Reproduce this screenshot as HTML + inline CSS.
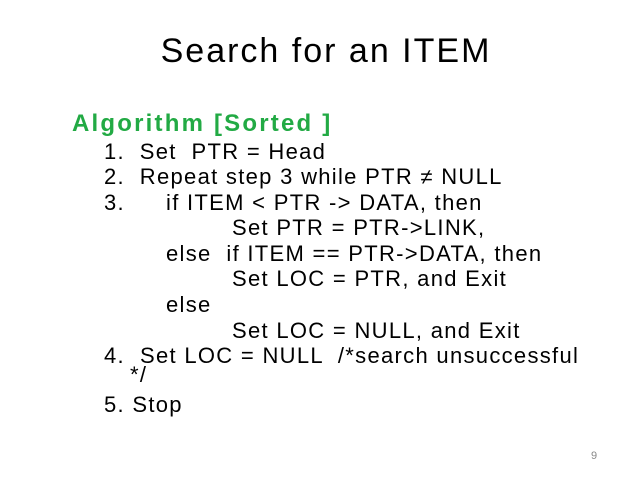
<!DOCTYPE html>
<html><head><meta charset="utf-8"><style>
body{margin:0;width:638px;height:479px;background:#fff;position:relative;overflow:hidden;font-family:"Liberation Sans",sans-serif;color:#000}
.t{position:absolute;white-space:pre;font-size:22px;line-height:24px;letter-spacing:1.3px}
</style></head><body>
<div class="t" style="left:0;width:652px;text-align:center;top:32px;font-size:34px;line-height:38px;letter-spacing:2px">Search for an ITEM</div>
<div class="t" style="left:72px;top:112px;font-size:24px;font-weight:bold;color:#22aa44;letter-spacing:2.2px">Algorithm [Sorted ]</div>
<div class="t" style="left:104px;top:140px">1.  Set  PTR = Head</div>
<div class="t" style="left:104px;top:165px">2.  Repeat step 3 while PTR &#8800; NULL</div>
<div class="t" style="left:104px;top:191px">3.</div>
<div class="t" style="left:166px;top:191px">if ITEM &lt; PTR -&gt; DATA, then</div>
<div class="t" style="left:232px;top:216px">Set PTR = PTR-&gt;LINK,</div>
<div class="t" style="left:166px;top:242px">else  if ITEM == PTR-&gt;DATA, then</div>
<div class="t" style="left:232px;top:267px">Set LOC = PTR, and Exit</div>
<div class="t" style="left:166px;top:293px">else</div>
<div class="t" style="left:232px;top:319px">Set LOC = NULL, and Exit</div>
<div class="t" style="left:104px;top:344px">4.</div>
<div class="t" style="left:140px;top:344px">Set LOC = NULL  /*search unsuccessful</div>
<div class="t" style="left:130px;top:363px">*/</div>
<div class="t" style="left:104px;top:393px">5. Stop</div>
<div class="t" style="left:591px;top:449px;font-size:11px;line-height:14px;color:#888;letter-spacing:0">9</div>
</body></html>
